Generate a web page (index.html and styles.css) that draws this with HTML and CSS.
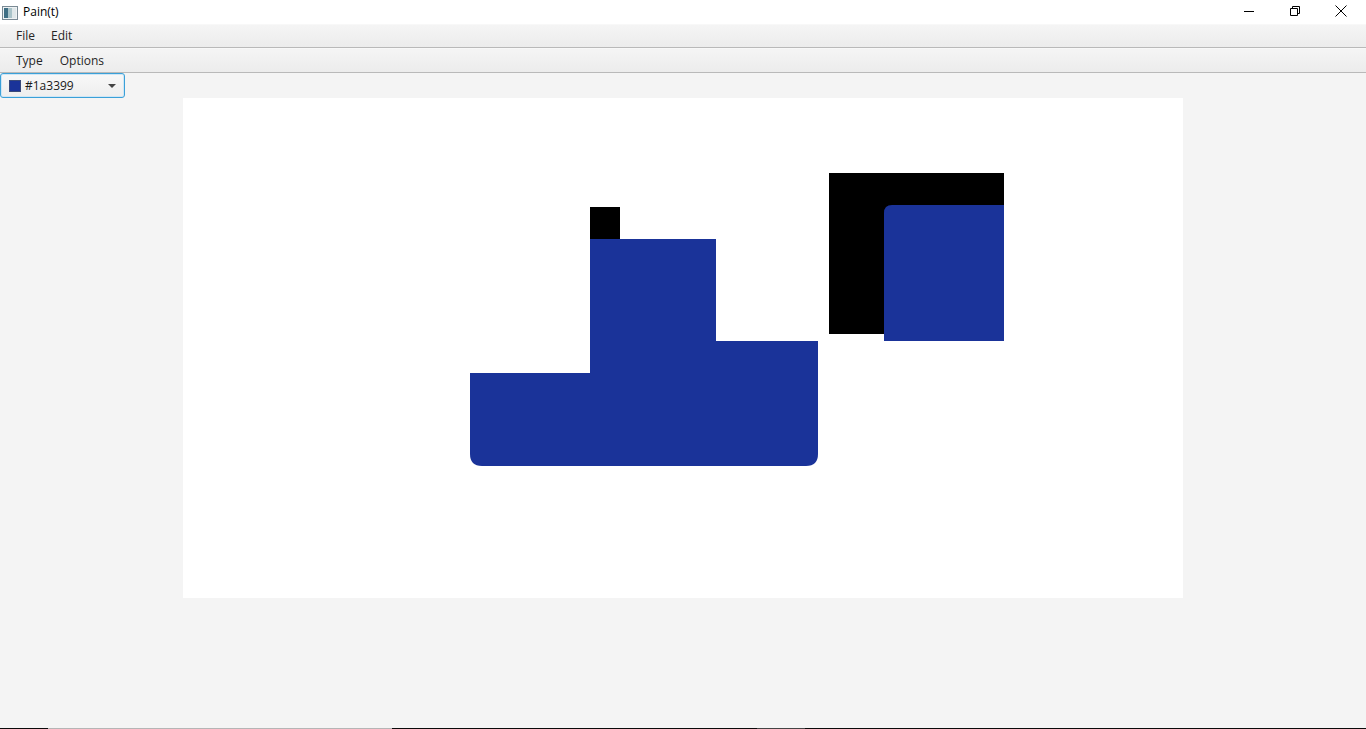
FILE: index.html
```html
<!DOCTYPE html>
<html>
<head>
<meta charset="utf-8">
<title>Pain(t)</title>
<link rel="stylesheet" href="styles.css">
</head>
<body>
<div class="window">
  <div class="titlebar">
    <div class="title-left">
      <svg class="app-icon" width="16" height="14" viewBox="0 0 16 14">
        <rect x="0.5" y="0.5" width="15" height="13" fill="#eef2f4" stroke="#7a8a94"/>
        <rect x="2" y="2" width="4" height="10" fill="#3f6f84"/>
        <rect x="6" y="2" width="4" height="10" fill="#a9c3c9"/>
        <rect x="10" y="2" width="4" height="10" fill="#dfe7e9"/>
      </svg>
      <span class="title-text">Pain(t)</span>
    </div>
    <div class="win-controls">
      <span class="ctl">
        <svg width="12" height="12" viewBox="0 0 12 12"><path d="M1 6.5H11" stroke="#000" stroke-width="1"/></svg>
      </span>
      <span class="ctl">
        <svg width="12" height="12" viewBox="0 0 12 12"><path d="M1.5 3.5H8.5V10.5H1.5Z M3.5 3.5V1.5H10.5V8.5H8.5" fill="none" stroke="#000" stroke-width="1"/></svg>
      </span>
      <span class="ctl">
        <svg width="12" height="12" viewBox="0 0 12 12"><path d="M0.5 0.5L11.5 11.5M11.5 0.5L0.5 11.5" stroke="#000" stroke-width="1"/></svg>
      </span>
    </div>
  </div>
  <div class="menubar first">
    <span class="menu-item">File</span>
    <span class="menu-item">Edit</span>
  </div>
  <div class="menubar second">
    <span class="menu-item">Type</span>
    <span class="menu-item">Options</span>
  </div>
  <div class="content">
    <div class="toolrow">
      <div class="combo">
        <span class="swatch"></span>
        <span class="combo-text">#1a3399</span>
        <span class="combo-arrow"></span>
      </div>
    </div>
    <div class="canvas-wrap">
      <div class="canvas">
        <svg width="1000" height="500" viewBox="0 0 1000 500">
          <rect x="407" y="109" width="30" height="32" fill="#000"/>
          <path d="M407 141H533V243H635V356Q635 368 623 368H299Q287 368 287 356V275H407Z" fill="#1a3399"/>
          <rect x="646" y="75" width="175" height="161" fill="#000"/>
          <path d="M709 107H821V243H701V115Q701 107 709 107Z" fill="#1a3399"/>
        </svg>
      </div>
    </div>
  </div>
  <div class="taskedge">
    <span class="seg dark" style="width:48px"></span>
    <span class="seg light" style="width:344px"></span>
    <span class="seg dark" style="width:365px"></span>
    <span class="seg mid" style="width:48px"></span>
    <span class="seg dark grow"></span>
  </div>
</div>
</body>
</html>
```

FILE: styles.css
```css
* { box-sizing: border-box; }
html, body {
  margin: 0;
  padding: 0;
  width: 1366px;
  height: 729px;
  overflow: hidden;
  background: #f4f4f4;
  font-family: "Open Sans", "Noto Sans", "Liberation Sans", sans-serif;
  color: #1a1a1a;
}
.window {
  display: flex;
  flex-direction: column;
  height: 729px;
}
.titlebar {
  height: 24px;
  background: #ffffff;
  display: flex;
  justify-content: space-between;
  align-items: center;
}
.title-left {
  display: flex;
  align-items: center;
  padding-left: 2px;
  gap: 5px;
}
.app-icon { display: block; margin-top: 1px; }
.title-text {
  font-size: 12px;
  color: #000;
  line-height: 24px;
}
.win-controls {
  display: flex;
  height: 24px;
  padding-right: 2px;
}
.ctl {
  width: 46px;
  height: 22px;
  display: flex;
  align-items: center;
  justify-content: center;
}
.menubar {
  height: 25px;
  display: flex;
  align-items: center;
  padding-left: 8px;
  background: linear-gradient(#f5f5f5, #ececec);
  border-bottom: 1px solid #b9b9b9;
  box-shadow: inset 0 1px 0 #f8f8f8;
}
.menubar.first { height: 24px; }
.menubar.second { padding-top: 2px; }
.menu-item {
  font-size: 12px;
  color: #262626;
  padding: 0 8px;
  line-height: 22px;
}
.menubar.second .menu-item:last-child { padding-left: 9px; }
.content {
  flex: 1;
  display: flex;
  flex-direction: column;
  background: #f4f4f4;
}
.toolrow {
  height: 25px;
  display: flex;
}
.combo {
  width: 125px;
  height: 25px;
  border: 1px solid #3aa0d8;
  border-radius: 3px;
  box-shadow: inset 0 0 0 1px #cfe6f5;
  background: linear-gradient(#f8f8f8, #eeeeee);
  display: flex;
  align-items: center;
  padding-left: 8px;
  position: relative;
}
.swatch {
  width: 12px;
  height: 12px;
  background: #1a3399;
  border: 1px solid #3a4a7a;
  margin-right: 4px;
}
.combo-text {
  font-size: 12px;
  color: #1a1a1a;
}
.combo-arrow {
  position: absolute;
  right: 8px;
  top: 10px;
  width: 0;
  height: 0;
  border-left: 4px solid transparent;
  border-right: 4px solid transparent;
  border-top: 4px solid #444;
}
.canvas-wrap {
  display: flex;
  justify-content: center;
}
.canvas {
  width: 1000px;
  height: 500px;
  background: #ffffff;
}
.canvas svg { display: block; }
.taskedge {
  height: 1px;
  display: flex;
}
.seg { display: block; height: 1px; }
.seg.dark { background: #0a0a0a; }
.seg.light { background: #b5b5b5; }
.seg.mid { background: #444; }
.seg.grow { flex: 1; }
```
